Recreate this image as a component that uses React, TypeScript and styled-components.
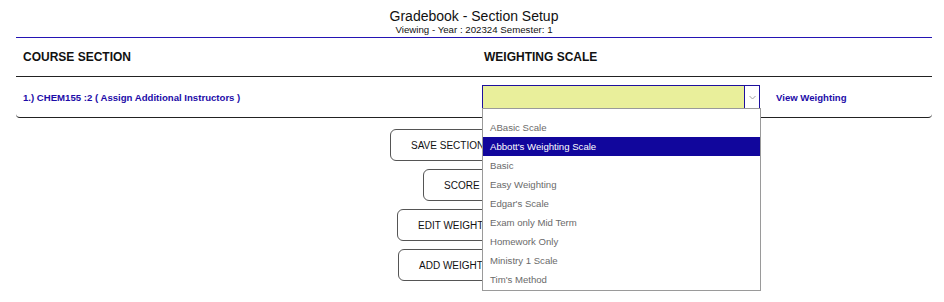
import React from 'react';
import styled, { createGlobalStyle } from 'styled-components';

const GlobalStyle = createGlobalStyle`
  html, body {
    background: #fff;
  }
  body {
    margin: 8px;
    min-height: calc(100vh - 16px);
    font-family: "Liberation Sans", Arial, sans-serif;
  }
`;

const Page = styled.div`
  padding: 0 4px 0 8px;
  min-height: 286px;
`;

const Header = styled.header`
  text-align: center;
  border-bottom: 1px solid #2414b4;
  padding-bottom: 1px;
`;

const Title = styled.h1`
  margin: 0;
  font-size: 14px;
  line-height: 16px;
  font-weight: normal;
  color: #111;
`;

const Subtitle = styled.div`
  font-size: 9.7px;
  line-height: 12px;
  color: #111;
`;

const Table = styled.div`
  border-bottom: 1px solid #222;
  border-radius: 0 0 4px 4px;
`;

const Row = styled.div<{ $head?: boolean }>`
  display: grid;
  grid-template-columns: 466px 1fr;
  align-items: center;
  height: ${(p) => (p.$head ? '38px' : '40px')};
  border-bottom: ${(p) => (p.$head ? '1px solid #222' : 'none')};
`;

const HeadCell = styled.div<{ $pad: number }>`
  padding-left: ${(p) => p.$pad}px;
  font-size: 12px;
  font-weight: bold;
  color: #111;
`;

const SectionLink = styled.a`
  padding-left: 7px;
  font-size: 9.6px;
  font-weight: bold;
  color: #1d0ca8;
  text-decoration: none;
`;

const ScaleCell = styled.div`
  display: flex;
  align-items: center;
  gap: 16px;
`;

const SelectWrap = styled.div`
  position: relative;
  width: 278px;
`;

const SelectBox = styled.div`
  display: flex;
  height: 22px;
  border: 1px solid #1e109e;
  background: #e9ef9b;
`;

const SelectValue = styled.div`
  flex: 1;
`;

const Arrow = styled.div`
  width: 14px;
  border-left: 1px solid #1e109e;
  background: #fff;
  display: flex;
  align-items: center;
  justify-content: center;
`;

const Options = styled.ul`
  position: absolute;
  top: 23px;
  left: 0;
  width: 277px;
  margin: 0;
  padding: 9px 0 1px;
  list-style: none;
  background: #fff;
  border: 1px solid #9a9a9a;
  z-index: 2;
`;

const Option = styled.li<{ $active?: boolean }>`
  height: 19px;
  line-height: 19px;
  padding-left: 7px;
  font-size: 9.6px;
  color: ${(p) => (p.$active ? '#fff' : '#6a6a6a')};
  background: ${(p) => (p.$active ? '#11069c' : 'transparent')};
`;

const ViewLink = styled.a`
  font-size: 9.6px;
  font-weight: bold;
  color: #1d0ca8;
  text-decoration: none;
`;

const Actions = styled.div`
  display: flex;
  flex-direction: column;
  align-items: center;
  gap: 8px;
  margin-top: 11px;
`;

const Button = styled.button<{ $w: number }>`
  width: ${(p) => p.$w}px;
  height: 32px;
  padding: 0 20px;
  text-align: left;
  border: 1px solid #555;
  border-radius: 6px;
  background: #fff;
  font-family: "Liberation Sans", Arial, sans-serif;
  font-size: 10px;
  color: #111;
  white-space: nowrap;
  overflow: hidden;
`;

const scales = [
  'ABasic Scale',
  "Abbott's Weighting Scale",
  'Basic',
  'Easy Weighting',
  "Edgar's Scale",
  'Exam only Mid Term',
  'Homework Only',
  'Ministry 1 Scale',
  "Tim's Method",
];

export default function App() {
  return (
    <Page>
      <GlobalStyle />
      <Header>
        <Title>Gradebook - Section Setup</Title>
        <Subtitle>Viewing - Year : 202324 Semester: 1</Subtitle>
      </Header>
      <Table>
        <Row $head>
          <HeadCell $pad={7}>COURSE SECTION</HeadCell>
          <HeadCell $pad={2}>WEIGHTING SCALE</HeadCell>
        </Row>
        <Row>
          <SectionLink href="#">1.) CHEM155 :2 ( Assign Additional Instructors )</SectionLink>
          <ScaleCell>
            <SelectWrap>
              <SelectBox>
                <SelectValue />
                <Arrow>
                  <svg width="7" height="5" viewBox="0 0 7 5">
                    <path d="M0.5 1 L3.5 4 L6.5 1" fill="none" stroke="#a0a0a0" strokeWidth="1" />
                  </svg>
                </Arrow>
              </SelectBox>
              <Options>
                {scales.map((s) => (
                  <Option key={s} $active={s === "Abbott's Weighting Scale"}>
                    {s}
                  </Option>
                ))}
              </Options>
            </SelectWrap>
            <ViewLink href="#">View Weighting</ViewLink>
          </ScaleCell>
        </Row>
      </Table>
      <Actions>
        <Button $w={168}>SAVE SECTION SETTINGS</Button>
        <Button $w={102}>SCORE SETUP</Button>
        <Button $w={154}>EDIT WEIGHTING SCALE</Button>
        <Button $w={152}>ADD WEIGHTING SCALE</Button>
      </Actions>
    </Page>
  );
}
